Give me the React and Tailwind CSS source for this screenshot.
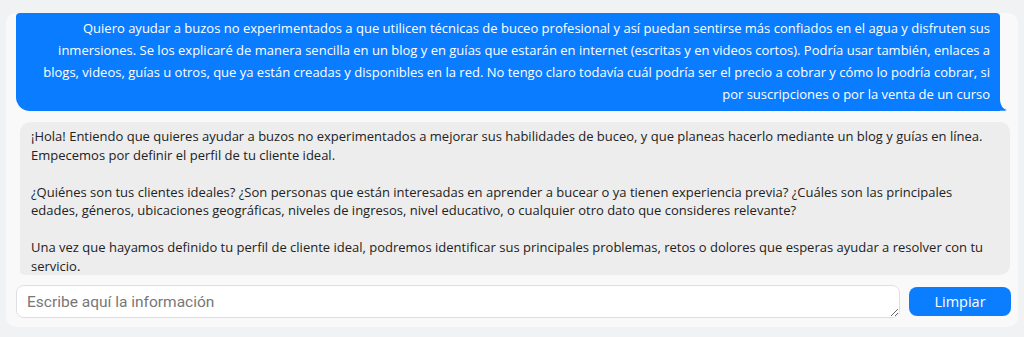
export default function App() {
  return (
    <div className="w-[1024px] h-[337px] bg-[#f1f2f4] pt-[13px] px-[6px] overflow-hidden" style={{ fontFamily: '"Open Sans", sans-serif' }}>
      <div className="bg-[#f9f9f9] rounded-[10px] h-[314px] flex flex-col pl-[10px] pr-[7px]">
        <div className="h-[262px] mr-[1px] overflow-hidden rounded-b-[10px] flex flex-col">
          <div className="relative mr-[10px] bg-[#0a7cff] rounded-t-[4px] rounded-bl-[14px] pt-[4px] pb-[6px] pr-[10px] pl-[10px] text-right text-white text-[13px] leading-[22px]">
            Quiero ayudar a buzos no experimentados a que utilicen técnicas de buceo profesional y así puedan sentirse más confiados en el agua y disfruten sus inmersiones. Se los explicaré de manera sencilla en un blog y en guías que estarán en internet (escritas y en videos cortos). Podría usar también, enlaces a blogs, videos, guías u otros, que ya están creadas y disponibles en la red. No tengo claro todavía cuál podría ser el precio a cobrar y cómo lo podría cobrar, si por suscripciones o por la venta de un curso
            <svg className="absolute right-[-7px] bottom-0" width="12" height="12" viewBox="0 0 12 12">
              <path d="M0 0 L5 0 C5 6 8 10 12 11 C8 12.5 3 12 0 10 Z" fill="#0a7cff" />
            </svg>
          </div>
          <div className="mt-[11px] ml-[4px] bg-[#ededed] rounded-[10px] pt-[5px] px-[11px] text-[#222] text-[13px] leading-[18.5px] shrink-0">
            <p>¡Hola! Entiendo que quieres ayudar a buzos no experimentados a mejorar sus habilidades de buceo, y que planeas hacerlo mediante un blog y guías en línea. Empecemos por definir el perfil de tu cliente ideal.</p>
            <p className="mt-[18.5px]">¿Quiénes son tus clientes ideales? ¿Son personas que están interesadas en aprender a bucear o ya tienen experiencia previa? ¿Cuáles son las principales edades, géneros, ubicaciones geográficas, niveles de ingresos, nivel educativo, o cualquier otro dato que consideres relevante?</p>
            <p className="mt-[18.5px] pb-[12px]">Una vez que hayamos definido tu perfil de cliente ideal, podremos identificar sus principales problemas, retos o dolores que esperas ayudar a resolver con tu servicio.</p>
          </div>
        </div>
        <div className="flex items-center gap-[9px] mt-[10px]">
          <textarea
            rows={1}
            placeholder="Escribe aquí la información"
            className="w-[884px] h-[33px] bg-white border border-[#dedede] rounded-[8px] px-[10px] py-[6px] text-[15.5px] leading-[20px] placeholder:text-[#777] outline-none"
            style={{ fontFamily: 'Roboto, sans-serif' }}
          />
          <button className="w-[102px] h-[29px] bg-[#0b7dff] rounded-[8px] text-white text-[14.5px]">Limpiar</button>
        </div>
      </div>
    </div>
  );
}
